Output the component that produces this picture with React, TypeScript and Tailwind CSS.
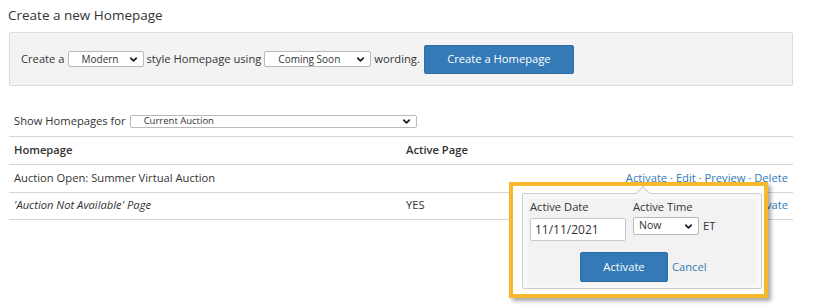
import { ChevronDown } from 'lucide-react';

function Select({ label, className, textClass }: { label: string; className: string; textClass?: string }) {
  return (
    <div
      className={`relative flex items-center bg-white border border-[#b9b9b9] rounded-[2px] text-[#333] ${className}`}
    >
      <span className={`flex-1 truncate ${textClass ?? ''}`}>{label}</span>
      <ChevronDown size={11} strokeWidth={4} className="shrink-0 mr-1 text-[#222]" />
    </div>
  );
}

export default function App() {
  return (
    <div
      className="relative w-[820px] h-[308px] bg-white text-[#333] text-[11.2px] overflow-hidden"
      style={{ fontFamily: '"Open Sans", "Noto Sans", sans-serif' }}
    >
      <div className="px-[8px] pt-[5px]">
        <h2 className="text-[13.5px] leading-[20px] text-[#333]">Create a new Homepage</h2>

        {/* create box */}
        <div className="mt-[7px] ml-px w-[784px] h-[54px] bg-[#f3f3f3] border border-[#dcdcdc] rounded-[2px] flex items-center pl-[11px] gap-[3px]">
          <span>Create a</span>
          <Select label="Modern" className="w-[76px] h-[16px] text-[10px] pl-[13px]" />
          <span>style Homepage using</span>
          <Select label="Coming Soon" className="w-[107px] h-[16px] text-[10px] pl-[13px]" />
          <span>wording.</span>
          <button className="ml-px w-[150px] h-[29px] bg-[#337ab7] border border-[#2e6da4] rounded-[2px] text-white text-[11.2px]">
            Create a Homepage
          </button>
        </div>

        {/* filter */}
        <div className="mt-[27px] ml-[6px] flex items-center gap-[4px]">
          <span>Show Homepages for</span>
          <Select label="Current Auction" className="w-[287px] h-[13px] text-[9.5px] pl-[13px]" />
        </div>

        {/* table */}
        <div className="mt-[6px] ml-px w-[784px]">
          <div className="flex items-center h-[28px] border-t border-[#d5d5d5] font-semibold">
            <span className="w-[397px] pl-[5px]">Homepage</span>
            <span>Active Page</span>
          </div>
          <div className="flex items-center h-[28px] border-t border-[#d5d5d5]">
            <span className="w-[397px] pl-[5px]">Auction Open: Summer Virtual Auction</span>
            <span className="flex-1"></span>
            <span className="pr-[5px] text-[#337ab7]">
              Activate · Edit · Preview · Delete
            </span>
          </div>
          <div className="flex items-center h-[28px] border-t border-b border-[#d5d5d5]">
            <span className="w-[397px] pl-[5px] italic">'Auction Not Available' Page</span>
            <span>YES</span>
            <span className="flex-1"></span>
            <span className="pr-[5px] text-[#337ab7]">Activate</span>
          </div>
        </div>
      </div>

      {/* highlight frame around the popover */}
      <div className="absolute left-[509px] top-[182px] w-[259px] h-[116px] border-[4px] border-[#f7b82b] bg-white shadow-[3px_3px_4px_rgba(0,0,0,0.35)]">
        <div className="absolute left-[9px] top-[7px] w-[240px] h-[96px] bg-[#f7f7f7] border border-[#cfcfcf] rounded-[2px] p-[5px]">
          {/* arrow */}
          <div className="absolute -top-[6px] left-[115px] w-[10px] h-[10px] bg-[#f7f7f7] border-l border-t border-[#cfcfcf] rotate-45"></div>
          <div className="relative h-full bg-[#f2f2f2] rounded-[2px] px-[2px] pt-0">
            <div className="flex gap-[7px]">
              <div className="flex flex-col">
                <span className="leading-[16px]">Active Date</span>
                <div className="mt-[3px] w-[96px] h-[23px] bg-white border border-[#c8c8c8] rounded-[2px] flex items-center pl-[4px] text-[12px]">
                  11/11/2021
                </div>
              </div>
              <div className="flex flex-col">
                <span className="leading-[16px]">Active Time</span>
                <div className="mt-[2px] flex items-center gap-[4px]">
                  <Select label="Now" className="w-[66px] h-[18px] text-[10.5px] pl-[5px]" />
                  <span>ET</span>
                </div>
              </div>
            </div>
            <div className="mt-[11px] flex items-center gap-[4px] pl-[50px]">
              <button className="w-[88px] h-[30px] bg-[#337ab7] border border-[#2e6da4] rounded-[2px] text-white text-[11.2px]">
                Activate
              </button>
              <span className="text-[#337ab7]">Cancel</span>
            </div>
          </div>
        </div>
      </div>
    </div>
  );
}
